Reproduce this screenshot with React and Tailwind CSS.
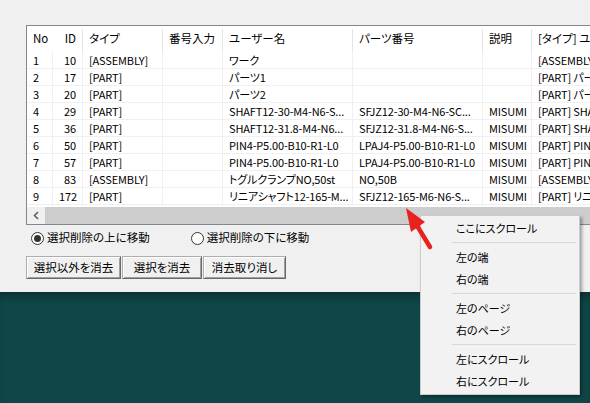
import React from 'react';

const columns = [
  { key: 'no', label: 'No', w: 'w-[26px]', align: 'text-left' },
  { key: 'id', label: 'ID', w: 'w-[30px]', align: 'text-right' },
  { key: 'type', label: 'タイプ', w: 'w-[80px]', align: 'text-left' },
  { key: 'num', label: '番号入力', w: 'w-[60px]', align: 'text-left' },
  { key: 'user', label: 'ユーザー名', w: 'w-[130px]', align: 'text-left' },
  { key: 'part', label: 'パーツ番号', w: 'w-[130px]', align: 'text-left' },
  { key: 'desc', label: '説明', w: 'w-[49px]', align: 'text-left' },
  { key: 'full', label: '[タイプ] ユーザー名', w: 'w-[160px]', align: 'text-left' },
];

const rows = [
  ['1', '10', '[ASSEMBLY]', '', 'ワーク', '', '', '[ASSEMBLY] ワーク'],
  ['2', '17', '[PART]', '', 'パーツ1', '', '', '[PART] パーツ1'],
  ['3', '20', '[PART]', '', 'パーツ2', '', '', '[PART] パーツ2'],
  ['4', '29', '[PART]', '', 'SHAFT12-30-M4-N6-S...', 'SFJZ12-30-M4-N6-SC...', 'MISUMI', '[PART] SHAFT12-30-M4'],
  ['5', '36', '[PART]', '', 'SHAFT12-31.8-M4-N6...', 'SFJZ12-31.8-M4-N6-S...', 'MISUMI', '[PART] SHAFT12-31.8'],
  ['6', '50', '[PART]', '', 'PIN4-P5.00-B10-R1-L0', 'LPAJ4-P5.00-B10-R1-L0', 'MISUMI', '[PART] PIN4-P5.00'],
  ['7', '57', '[PART]', '', 'PIN4-P5.00-B10-R1-L0', 'LPAJ4-P5.00-B10-R1-L0', 'MISUMI', '[PART] PIN4-P5.00'],
  ['8', '83', '[ASSEMBLY]', '', 'トグルクランプNO,50st', 'NO,50B', 'MISUMI', '[ASSEMBLY] トグルクランプ'],
  ['9', '172', '[PART]', '', 'リニアシャフト12-165-M...', 'SFJZ12-165-M6-N6-S...', 'MISUMI', '[PART] リニアシャフト'],
];

const MenuItem = ({ children }) => (
  <div className="h-[22px] flex items-center pl-[35px]">{children}</div>
);

const MenuSep = () => (
  <div className="h-[7px] flex items-center ml-[31px] mr-[3px]">
    <div className="h-px w-full bg-[#d7d7d7]" />
  </div>
);

const Radio = ({ checked, label }) => (
  <div className="flex items-center gap-[3px]">
    <span className="w-[13px] h-[13px] rounded-full border border-[#333] bg-white flex items-center justify-center">
      {checked && <span className="w-[7px] h-[7px] rounded-full bg-[#333]" />}
    </span>
    <span>{label}</span>
  </div>
);

const Btn = ({ w, children }) => (
  <button className={`${w} h-[23px] bg-[#f0f0f0] border border-[#adadad] border-r-[#696969] border-b-[#696969] shadow-[inset_1px_1px_0_#ffffff,inset_-1px_-1px_0_#a0a0a0] flex items-center justify-center`}>
    {children}
  </button>
);

export default function App() {
  return (
    <div className="relative w-[590px] h-[403px] overflow-hidden text-[11.5px] leading-none text-black [font-family:'Noto_Sans_CJK_JP','Noto_Sans',sans-serif] [font-feature-settings:'palt']">
      {/* dialog body */}
      <div className="h-[292px] bg-[#f0f0f0] pt-[25px] pl-[26px]">
        <div className="w-[580px] border border-r-0 border-[#828790] bg-white overflow-hidden">
          {/* header */}
          <div className="flex h-[26px] whitespace-nowrap">
            {columns.map((c) => (
              <div key={c.key} className={`${c.w} shrink-0 flex items-center justify-between`}>
                <span className={`flex-1 px-[6px] ${c.align}`}>{c.label}</span>
                <span className="w-px h-[23px] self-end bg-[#e5e5e5]" />
              </div>
            ))}
          </div>
          {/* rows */}
          {rows.map((r, i) => (
            <div key={i} className="flex h-[17px] whitespace-nowrap border-b border-[#f0f0f0] text-[11px] tracking-[-0.15px]">
              {r.map((cell, j) => (
                <div key={j} className={`${columns[j].w} shrink-0 flex items-center border-r border-[#f0f0f0] overflow-hidden`}>
                  <span className={`flex-1 px-[6px] ${columns[j].align}`}>{cell}</span>
                </div>
              ))}
            </div>
          ))}
          {/* horizontal scrollbar */}
          <div className="mt-[2px] flex h-[17px] bg-[#f0f0f0]">
            <div className="w-[18px] flex items-center justify-center">
              <svg width="8" height="9" viewBox="0 0 8 9">
                <path d="M6 1 L2.5 4.5 L6 8" fill="none" stroke="#606060" strokeWidth="1.6" />
              </svg>
            </div>
            <div className="flex-1 bg-[#cdcdcd]" />
          </div>
        </div>

        {/* radios */}
        <div className="flex items-center h-[14px] mt-[6px] pl-[5px]">
          <Radio checked label="選択削除の上に移動" />
          <div className="ml-[41px]">
            <Radio label="選択削除の下に移動" />
          </div>
        </div>

        {/* buttons */}
        <div className="flex gap-px mt-[11px]">
          <Btn w="w-[95px]">選択以外を消去</Btn>
          <Btn w="w-[80px]">選択を消去</Btn>
          <Btn w="w-[83px]">消去取り消し</Btn>
        </div>
      </div>

      {/* desktop background */}
      <div className="h-[111px] bg-[#0f4749] shadow-[inset_0_8px_10px_-4px_rgba(0,0,0,0.35)]" />

      {/* scrollbar context menu */}
      <div className="absolute left-[420px] top-[215px] w-[160px] h-[180px] bg-[#f2f2f2] border border-[#cccccc] py-[1px] shadow-[2px_2px_3px_rgba(0,0,0,0.35)] text-[11px]">
        <MenuItem>ここにスクロール</MenuItem>
        <MenuSep />
        <MenuItem>左の端</MenuItem>
        <MenuItem>右の端</MenuItem>
        <MenuSep />
        <MenuItem>左のページ</MenuItem>
        <MenuItem>右のページ</MenuItem>
        <MenuSep />
        <MenuItem>左にスクロール</MenuItem>
        <MenuItem>右にスクロール</MenuItem>
      </div>

      {/* red pointer arrow */}
      <svg className="absolute left-0 top-0 pointer-events-none" width="590" height="403">
        <line x1="430" y1="247" x2="416" y2="224" stroke="#e8221e" strokeWidth="4.5" strokeLinecap="round" />
        <polygon points="406,208 425,222 411,232" fill="#e8221e" />
      </svg>
    </div>
  );
}
